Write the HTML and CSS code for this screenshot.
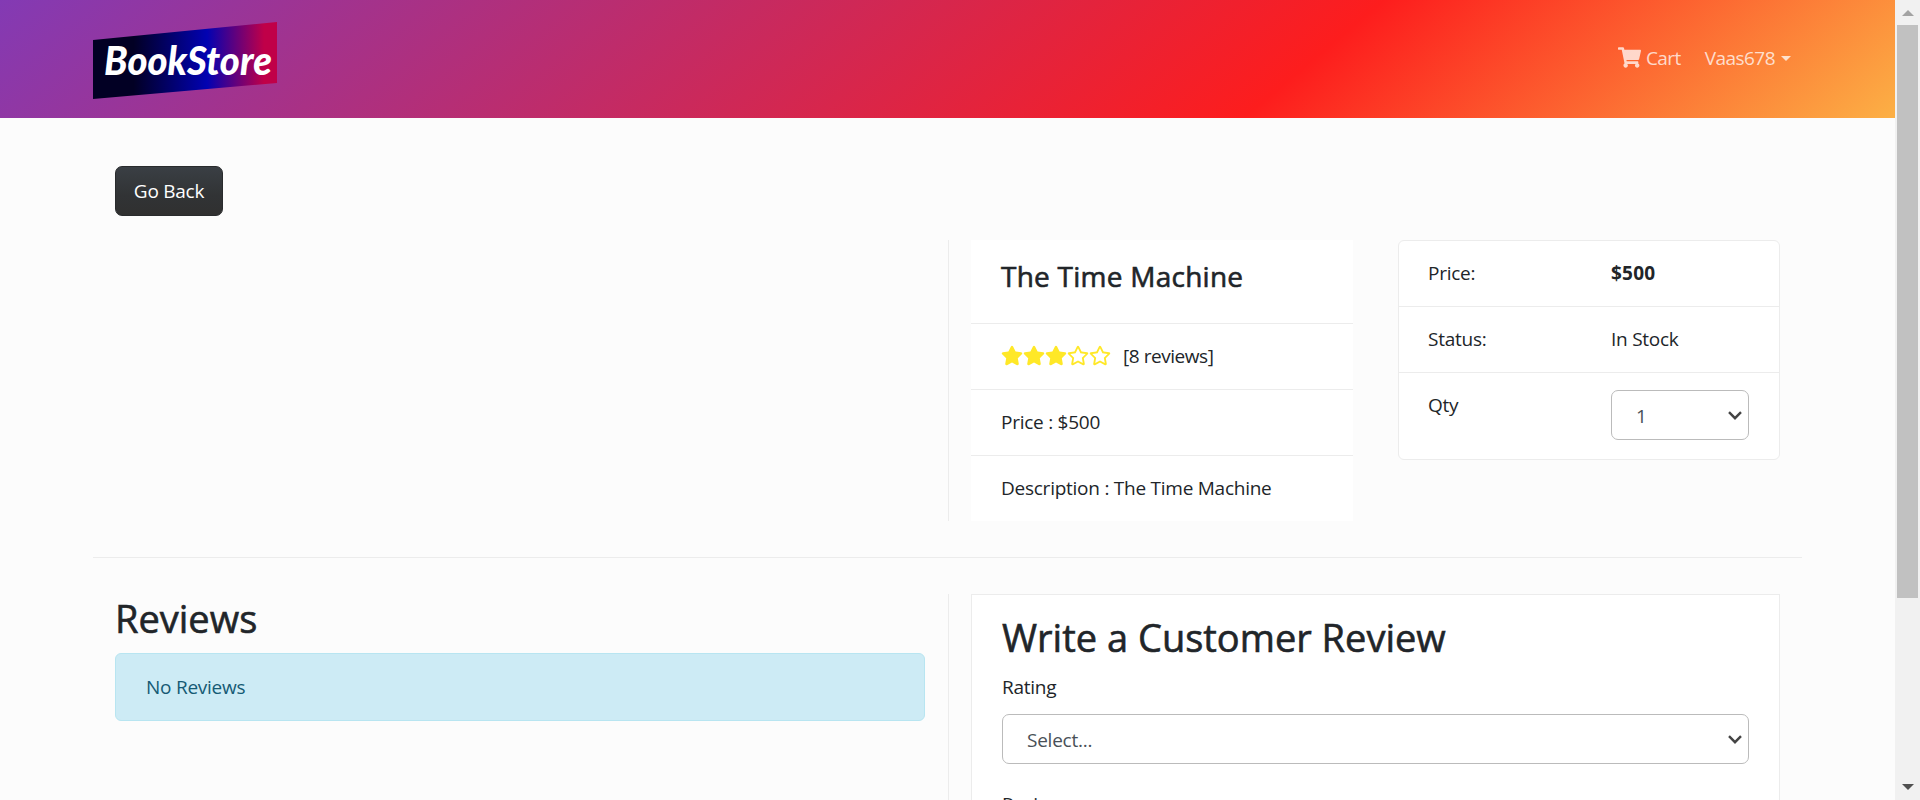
FILE: index.html
```html
<!DOCTYPE html>
<html lang="en">
<head>
<meta charset="utf-8">
<title>BookStore</title>
<link rel="stylesheet" href="styles.css">
</head>
<body>
<svg class="defs" width="0" height="0">
  <symbol id="star" viewBox="0 0 576 512"><path d="M259.300 17.800 194 150.200 47.900 171.500c-26.200 3.800-36.700 36.100-17.700 54.600l105.700 103-25 145.500c-4.500 26.300 23.200 46 46.400 33.700L288 439.600l130.700 68.700c23.200 12.200 50.900-7.400 46.400-33.700l-25-145.500 105.700-103c19-18.500 8.500-50.800-17.700-54.600L382 150.200 316.700 17.800c-11.700-23.600-45.600-23.900-57.400 0z"/></symbol>
  <symbol id="star-o" viewBox="0 0 576 512"><path d="M528.100 171.500L382 150.200 316.700 17.800c-11.700-23.600-45.600-23.900-57.400 0L194 150.200 47.900 171.500c-26.200 3.800-36.700 36.100-17.700 54.600l105.700 103-25 145.500c-4.500 26.300 23.200 46 46.400 33.700L288 439.600l130.700 68.700c23.200 12.200 50.900-7.400 46.400-33.700l-25-145.500 105.700-103c19-18.500 8.500-50.800-17.700-54.600zM388.600 312.300l23.700 138.400L288 385.400l-124.300 65.300 23.700-138.400-100.600-98 139-20.200 62.200-126 62.200 126 139 20.200-100.600 98z"/></symbol>
</svg>
<div class="window">
  <div class="page">
    <header class="navbar">
      <svg class="logo" viewBox="0 0 184 78" width="184" height="78">
        <defs><linearGradient id="lg"><stop offset="0" stop-color="#020024"/><stop offset=".22" stop-color="#020024"/><stop offset=".62" stop-color="#0202b2"/><stop offset=".93" stop-color="#c00048"/><stop offset="1" stop-color="#c00048"/></linearGradient></defs>
        <polygon points="0,18 184,0 184,61 0,77" fill="url(#lg)"/>
        <text class="logo-text" x="11" y="53" textLength="168" lengthAdjust="spacingAndGlyphs">BookStore</text>
      </svg>
      <nav class="links">
        <a class="link cart"><svg viewBox="0 0 576 512" width="23" height="21"><path fill="currentColor" d="M528.120 301.319l47.273-208C578.806 78.301 567.391 64 551.990 64H159.208l-9.166-44.810C147.758 8.021 137.930 0 126.529 0H24C10.745 0 0 10.745 0 24v16c0 13.255 10.745 24 24 24h69.883l70.248 343.435C147.325 417.100 136 435.222 136 456c0 30.928 25.072 56 56 56s56-25.072 56-56c0-15.674-6.447-29.835-16.824-40h209.647C430.447 426.165 424 440.326 424 456c0 30.928 25.072 56 56 56s56-25.072 56-56c0-22.172-12.888-41.332-31.579-50.405l5.517-24.276c3.413-15.018-8.002-29.319-23.403-29.319H218.117l-6.545-32h293.145c11.206 0 20.920-7.754 23.403-18.681z"/></svg><span>Cart</span></a>
        <a class="link user"><span>Vaas678</span><i class="caret"></i></a>
      </nav>
    </header>
    <main class="container">
      <div class="actions"><a class="btn">Go Back</a></div>
      <section class="row product">
        <div class="col half divided"></div>
        <div class="col quarter">
          <ul class="list flush">
            <li class="title"><h3>The Time Machine</h3></li>
            <li><span class="rating"><svg><use href="#star"/></svg><svg><use href="#star"/></svg><svg><use href="#star"/></svg><svg><use href="#star-o"/></svg><svg><use href="#star-o"/></svg></span><span class="count">[8 reviews]</span></li>
            <li>Price : $500</li>
            <li>Description : The Time Machine</li>
          </ul>
        </div>
        <div class="col quarter">
          <ul class="list card">
            <li><span>Price:</span><strong>$500</strong></li>
            <li><span>Status:</span><span>In Stock</span></li>
            <li class="qty"><span>Qty</span><div class="select"><span>1</span><svg class="chev" viewBox="0 0 14 9"><path d="M1 1.200 7 7.200 13 1.200"/></svg></div></li>
          </ul>
        </div>
      </section>
      <section class="row reviews">
        <div class="col half divided">
          <h2>Reviews</h2>
          <div class="alert">No Reviews</div>
        </div>
        <div class="col write">
          <div class="form">
            <h2>Write a Customer Review</h2>
            <label>Rating</label>
            <div class="select"><span>Select...</span><svg class="chev" viewBox="0 0 14 9"><path d="M1 1.200 7 7.200 13 1.200"/></svg></div>
            <label class="second">Review</label>
            <div class="textarea"></div>
          </div>
        </div>
      </section>
    </main>
  </div>
  <aside class="scrollbar"><i class="up"></i><div class="thumb"></div><i class="down"></i></aside>
</div>
</body>
</html>
```
FILE: styles.css
```css
* { box-sizing: border-box; }
body { margin: 0; background: #fcfcfc; color: #212529; font: 19px/30px "Open Sans", "Noto Sans", sans-serif; letter-spacing: -0.25px; overflow: hidden; }
h2, h3, ul { margin: 0; padding: 0; }
h2, h3 { font-weight: 500; -webkit-text-stroke: 0.6px currentColor; }
.defs { position: absolute; }
.window { display: flex; height: 800px; overflow: hidden; }
.page { flex: 1; min-width: 0; }
.navbar { height: 118px; padding: 22px 104px 0 93px; display: flex; justify-content: space-between; align-items: flex-start; background: linear-gradient(140deg, #833ab4 0%, #fd1d1d 68%, #fcb045 100%); }
.logo { display: block; }
.logo-text { font: italic 900 39px Lato, cursive; letter-spacing: 0; fill: #fff; }
.links { display: flex; gap: 24px; padding-top: 21px; color: rgba(255,255,255,.75); letter-spacing: -0.55px; }
.link { display: flex; align-items: center; }
.cart { gap: 5px; }
.cart svg { margin-top: -1px; }
.caret { margin-left: 6px; border: 5px solid transparent; border-top-color: currentColor; border-bottom: 0; }
.container { width: 1709px; margin-left: 93px; padding-top: 48px; }
.actions { padding-left: 22px; }
.btn { display: inline-flex; align-items: center; justify-content: center; width: 108px; height: 50px; border: 1px solid #292b2d; border-radius: 7px; color: #fff; background: linear-gradient(#3a3f44, #313335 60%, #303030); vertical-align: top; }
.row { display: flex; }
.col { padding: 0 22px; }
.half { width: 856px; flex: none; }
.divided { border-right: 1px solid #ececec; padding-right: 23px; }
.quarter { flex: 1; min-width: 0; }
.product { height: 342px; padding: 24px 0 36px; border-bottom: 1px solid #ececec; }
.quarter + .quarter { padding-left: 23px; }
.list { list-style: none; background: #fff; }
.list li { display: flex; height: 66px; padding: 17px 30px; border-bottom: 1px solid #ececec; }
.list li:last-child { border-bottom: 0; }
.list .title { height: 84px; padding-top: 18px; }
h3 { font-size: 28px; line-height: 36px; letter-spacing: 0.25px; }
.flush { height: 281px; }
.rating { display: flex; padding-top: 4px; }
.rating svg { width: 22px; height: 21px; fill: #ffe827; }
.count { margin-left: 12px; letter-spacing: -0.45px; }
.card { border: 1px solid #ececec; border-radius: 6px; width: 382px; }
.card li { padding: 17px 29px; }
.card li > :first-child { width: 183px; }
.card strong { letter-spacing: 0.2px; }
.card .qty { height: 86px; }
.select { display: flex; justify-content: space-between; align-items: center; height: 50px; border: 1px solid #bbb; border-radius: 7px; background: #fff; color: #495057; padding: 1px 6px 0 24px; }
.qty .select { width: 138px; }
.chev { width: 14px; height: 9px; margin-top: -1px; fill: none; stroke: #444; stroke-width: 2.4; }
.reviews { padding-top: 36px; height: 700px; }
h2 { font-size: 38px; line-height: 48px; letter-spacing: 0; }
.alert { margin-top: 11px; height: 68px; border: 1px solid #b8e5f1; border-radius: 6px; background: #cdebf5; color: #155a74; padding: 18px 30px; }
.write { width: 853px; }
.form { border: 1px solid #ececec; background: #fff; padding: 18px 30px; height: 600px; }
.form label { display: block; margin: 11px 0 12px; }
.form .second { margin-top: 25px; }
.textarea { height: 150px; border: 1px solid #bbb; border-radius: 7px; }
.scrollbar { width: 25px; flex: none; background: #f1f1f1; display: flex; flex-direction: column; align-items: center; padding: 10px 0; }
.up, .down { border: 6px solid transparent; }
.up { border-top: 0; border-bottom-color: #a3a3a3; }
.down { border-bottom: 0; border-top-color: #505050; margin-top: auto; }
.thumb { width: 21px; height: 573px; margin-top: 9px; background: #c1c1c1; }
```
